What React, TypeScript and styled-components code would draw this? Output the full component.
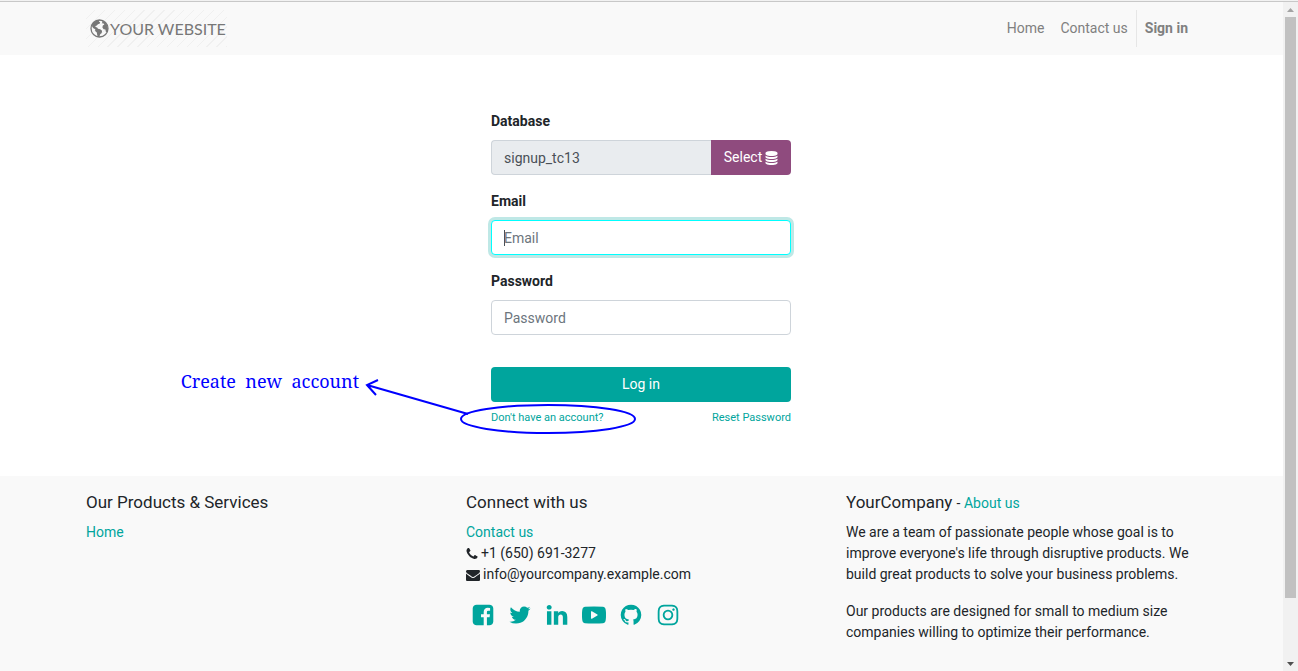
import React from "react";
import styled, { createGlobalStyle } from "styled-components";

const GlobalStyle = createGlobalStyle`
  *, *::before, *::after { box-sizing: border-box; }
  body {
    margin: 0;
    background: #fff;
    color: #212529;
    font: 14px/21px Roboto, "Liberation Sans", sans-serif;
  }
  a { color: #00a59d; text-decoration: none; }
`;

const Window = styled.div`
  display: grid;
  grid-template-columns: minmax(0, 1fr) 15px;
  grid-template-rows: 2px minmax(0, 1fr);
  height: 100vh;
  overflow: hidden;
`;

const WindowEdge = styled.div`
  grid-column: 1 / -1;
  background: #f2f2f2;
  border-bottom: 1px solid #c8c8c8;
`;

const Page = styled.div`
  display: flex;
  flex-direction: column;
`;

const Container = styled.div`
  width: 100%;
  max-width: 1141px;
  margin: 0 auto;
  padding: 0 16px 0 15px;
`;

const Header = styled.header`
  background: #f9f9f9;
  padding: 8px 0;
`;

const Bar = styled(Container)`
  display: flex;
  align-items: center;
  justify-content: space-between;
`;

const Brand = styled.a`
  display: flex;
  align-items: center;
  gap: 1px;
  height: 37px;
  padding: 0 1px 0 4px;
  background: repeating-linear-gradient(135deg, #f9f9f9 0 6px, #f0f0f0 6px 7px);
  color: #777;
  font: 400 16px/37px Lato, sans-serif;
`;

const Nav = styled.nav`
  display: flex;
  align-items: center;
`;

const NavLink = styled.a<{ $strong?: boolean }>`
  padding: 8px;
  color: #808080;
  font-weight: ${(p) => (p.$strong ? 700 : 400)};
  border-left: ${(p) => (p.$strong ? "1px solid #e6e6e6" : "0")};
`;

const Main = styled.main`
  flex: none;
  padding: 56px 1px 48px 0;
`;

const Form = styled.form`
  position: relative;
  max-width: 300px;
  margin: 0 auto;
`;

const Field = styled.div`
  margin-bottom: 16px;
`;

const Label = styled.label`
  display: block;
  margin-bottom: 8px;
  font-weight: 700;
`;

const Input = styled.input`
  display: block;
  width: 100%;
  min-width: 0;
  height: 35px;
  padding: 0 12px;
  border: 1px solid #ced4da;
  border-radius: 4px;
  background: #fff;
  color: #495057;
  font: inherit;
  &::placeholder { color: #6c757d; opacity: 1; }
  &:read-only { background: #e9ecef; border-radius: 4px 0 0 4px; border-right: 0; }
  &:focus {
    outline: 0;
    border-color: #00ffff;
    box-shadow: 0 0 0 3px #bfe8e6;
  }
  &:focus:placeholder-shown {
    caret-color: transparent;
    background: linear-gradient(#495057, #495057) 12px center / 1px 16px no-repeat #fff;
  }
`;

const InputGroup = styled.div`
  display: flex;
`;

const Button = styled.button<{ $tone: "plum" | "teal" }>`
  display: flex;
  flex: none;
  align-items: center;
  justify-content: center;
  gap: 3px;
  width: ${(p) => (p.$tone === "teal" ? "100%" : "80px")};
  height: 35px;
  padding: 0;
  border: 0;
  border-radius: ${(p) => (p.$tone === "teal" ? "4px" : "0 4px 4px 0")};
  background: ${(p) => (p.$tone === "teal" ? "#00a59d" : "#8f4b7e")};
  color: #fff;
  font: inherit;
`;

const Actions = styled.div`
  padding-top: 16px;
`;

const SmallLinks = styled.div`
  display: flex;
  justify-content: space-between;
  padding-top: 5px;
  font-size: 11px;
`;

const Note = styled.div`
  position: absolute;
  right: 432px;
  bottom: 35px;
  color: #0000ff;
  font: 18px/24px "Noto Serif", "Droid Serif", "Liberation Serif", serif;
  white-space: pre;
`;

const NoteMark = styled.svg`
  position: absolute;
  right: 150px;
  bottom: -10px;
  overflow: visible;
  pointer-events: none;
`;

const Footer = styled.footer`
  flex: 1;
  padding-top: 16px;
  background: #f9f9f9;
`;

const Columns = styled(Container)`
  display: grid;
  grid-template-columns: repeat(3, minmax(0, 1fr));
  gap: 30px;
`;

const Title = styled.h2`
  margin: 0 0 9px;
  font-size: 17px;
  line-height: 21px;
  font-weight: 400;
`;

const TitleAside = styled.span`
  font-size: 14px;
  line-height: 14px;
`;

const List = styled.ul`
  margin: 0;
  padding: 0;
  list-style: none;
`;

const ContactRow = styled.li`
  display: flex;
  align-items: center;
  gap: 3px;
`;

const Socials = styled.div`
  display: flex;
  gap: 13px;
  padding: 18px 0 0 5px;
`;

const SocialLink = styled.a`
  display: flex;
`;

const Text = styled.p`
  margin: 0 0 16px;
`;

const Scrollbar = styled.div`
  display: flex;
  flex-direction: column;
  align-items: center;
  background: #f1f1f1;
`;

const Arrow = styled.svg`
  flex: none;
`;

const Track = styled.div`
  flex: 1;
  align-self: stretch;
  padding: 0 2px;
`;

const Thumb = styled.div`
  height: 91%;
  background: #c1c1c1;
`;

const paths = {
  database: "M896 768q237 0 443-43t325-127v170q0 69-103 128t-280 93.5-385 34.5-385-34.5-280-93.5-103-128v-170q119 84 325 127t443 43zm0 768q237 0 443-43t325-127v170q0 69-103 128t-280 93.5-385 34.5-385-34.5-280-93.5-103-128v-170q119 84 325 127t443 43zm0-384q237 0 443-43t325-127v170q0 69-103 128t-280 93.5-385 34.5-385-34.5-280-93.5-103-128v-170q119 84 325 127t443 43zm0-1152q208 0 385 34.5t280 93.5 103 128v128q0 69-103 128t-280 93.5-385 34.5-385-34.5-280-93.5-103-128v-128q0-69 103-128t280-93.5 385-34.5z",
  phone: "M1600 1240q0 27-10 70.5t-21 68.5q-21 50-122 106-94 51-186 51-27 0-53-3.5t-57.5-12.5-47-14.5-55.5-20.5-49-18q-98-35-175-83-127-79-264-216t-216-264q-48-77-83-175-3-9-18-49t-20.5-55.5-14.5-47-12.5-57.5-3.5-53q0-92 51-186 56-101 106-122 25-11 68.5-21t70.5-10q14 0 21 3 18 6 53 76 11 19 30 54t35 63.5 31 53.5q3 4 17.5 25t21.5 35.5 7 28.5q0 20-28.5 50t-62 55-62 53-28.5 46q0 9 5 22.5t8.5 20.5 14 24 11.5 19q76 137 174 235t235 174q2 1 19 11.5t24 14 20.5 8.5 22.5 5q18 0 46-28.5t53-62 55-62 50-28.5q14 0 28.5 7t35.5 21.5 25 17.5q25 15 53.5 31t63.5 35 54 30q70 35 76 53 3 7 3 21z",
  envelope: "M1792 710v794q0 66-47 113t-113 47h-1472q-66 0-113-47t-47-113v-794q44 49 101 87 362 246 497 345 57 42 92.5 65.5t94.5 48 110 24.5h2q51 0 110-24.5t94.5-48 92.5-65.5q170-123 498-345 57-39 100-87zm0-294q0 79-49 151t-122 123q-376 261-468 325-10 7-42.5 31t-54 38.5-52 32.5-57.5 27-50 9h-2q-23 0-50-9t-57.5-27-52-32.5-54-38.5-42.5-31q-91-64-262-182.5t-205-142.5q-62-42-117-115.5t-55-136.5q0-78 41.5-130t118.5-52h1472q65 0 112.5 47t47.5 113z",
  facebook: "M1376 128q119 0 203.5 84.5t84.5 203.5v960q0 119-84.5 203.5t-203.5 84.5h-188v-595h199l30-232h-229v-148q0-56 23.5-84t91.5-28l122-1v-207q-63-9-178-9-136 0-217.5 80t-81.5 226v171h-200v232h200v595h-532q-119 0-203.5-84.5t-84.5-203.5v-960q0-119 84.5-203.5t203.5-84.5h960z",
  twitter: "M1684 408q-67 98-162 167 1 14 1 42 0 130-38 259.5t-115.5 248.5-184.5 210.5-258 146-323 54.5q-271 0-496-145 35 4 78 4 225 0 401-138-105-2-188-64.5t-114-159.5q33 5 61 5 43 0 85-11-112-23-185.5-111.5t-73.5-205.5v-4q68 38 146 41-66-44-105-115t-39-154q0-88 44-163 121 149 294.5 238.5t371.5 99.5q-8-38-8-74 0-134 94.5-228.5t228.5-94.5q140 0 236 102 109-21 205-78-37 115-142 178 93-10 186-50z",
  linkedin: "M477 625v991h-330v-991h330zm21-306q1 73-50.5 122t-135.5 49h-2q-82 0-132-49t-50-122q0-74 51.5-122.5t134.5-48.5 133 48.5 51 122.5zm1166 729v568h-329v-530q0-105-40.5-164.5t-126.5-59.5q-63 0-105.5 34.5t-63.5 85.5q-11 30-11 81v553h-329q2-399 2-647t-1-296l-1-48h329v144h-2q20-32 41-56t56.5-52 87-43.5 114.5-15.5q171 0 275 113.5t104 332.5z",
  youtube: "M1170 896q0-24-20-36l-408-236q-20-12-45-4-25 14-25 42v468q0 28 25 42 25 8 45-4l408-236q20-12 20-36zM1792 896q0 96-1 150t-8.5 136.5-22.5 147.5q-16 73-69 123t-124 58q-222 25-671 25t-671-25q-71-8-124.5-58t-69.5-123q-14-65-21.5-147.5t-8.5-136.5-1-150 1-150 8.5-136.5 22.5-147.5q16-73 69-123t124-58q222-25 671-25t671 25q71 8 124.500 58t69.500 123q14 65 21.500 147.500t8.500 136.500 1 150z",
  github: "M896 128q209 0 385.5 103t279.5 279.5 103 385.5q0 251-146.5 451.5t-378.5 277.5q-27 5-40-7t-13-30q0-3 .5-76.5t.5-134.5q0-97-52-142 57-6 102.5-18t94-39 81-66.5 53-105 20.5-150.5q0-119-79-206 37-91-8-204-28-9-81 11t-92 44l-38 24q-93-26-192-26t-192 26q-16-11-42.5-27t-83.5-38.5-85-13.5q-45 113-8 204-79 87-79 206 0 85 20.5 150t52.5 105 80.5 67 94 39 102.5 18q-39 36-49 103-21 10-45 15t-57 5-65.5-21.5-55.5-62.5q-19-32-48.5-52t-49.5-24l-20-3q-21 0-29 4.5t-5 11.5 9 14 13 12l7 5q22 10 43.5 38t31.5 51l10 23q13 38 44 61.5t67 30 69.5 7 55.5-3.5l23-4q0 38 .5 88.5t.5 54.5q0 18-13 30t-40 7q-232-77-378.5-277.5t-146.5-451.5q0-209 103-385.5t279.5-279.5 385.5-103z",
  instagram: "M1152 896q0-106-75-181t-181-75-181 75-75 181 75 181 181 75 181-75 75-181zm138 0q0 164-115 279t-279 115-279-115-115-279 115-279 279-115 279 115 115 279zm108-410q0 38-27 65t-65 27-65-27-27-65 27-65 65-27 65 27 27 65zm-502-220q-7 0-76.5-.5t-105.5 0-96.5 3-103 10-71.5 18.5q-50 20-88 58t-58 88q-11 29-18.5 71.5t-10 103-3 96.5 0 105.5.5 76.5-.5 76.5 0 105.5 3 96.5 10 103 18.5 71.5q20 50 58 88t88 58q29 11 71.5 18.5t103 10 96.5 3 105.5 0 76.5-.5 76.5.5 105.5 0 96.5-3 103-10 71.5-18.5q50-20 88-58t58-88q11-29 18.5-71.5t10-103 3-96.5 0-105.5-.5-76.5.5-76.5 0-105.5-3-96.5-10-103-18.5-71.5q-20-50-58-88t-88-58q-29-11-71.5-18.5t-103-10-96.5-3-105.5 0-76.5.5zm768 630q0 229-5 317-10 208-124 322t-322 124q-88 5-317 5t-317-5q-208-10-322-124t-124-322q-5-88-5-317t5-317q10-208 124-322t322-124q88-5 317-5t317 5q208 10 322 124t124 322q5 88 5 317z",
};

type IconName = keyof typeof paths;

const Icon = ({ name, size, trim = 0 }: { name: IconName; size: number; trim?: number }) => (
  <svg
    aria-hidden="true"
    width={size - trim}
    height={size}
    viewBox={`${(trim / size) * 896} 0 ${1792 - (trim / size) * 1792} 1792`}
    fill="currentColor"
    fillRule="evenodd"
  >
    <path d={paths[name]} />
  </svg>
);

const Globe = () => (
  <svg aria-hidden="true" width="19" height="19" viewBox="0 0 19 19" fill="currentColor">
    <circle cx="9.5" cy="9.5" r="8.500" fill="none" stroke="currentColor" strokeWidth="1.3" />
    <path d="M2 5.2 4.600 2.400 8.200 1l1.600.6-1 1.200 1.400.5-.6 1.500-1.700.5-1 1.300-1.500.4.2 1.100 1.500.5.9 1.200 2.200.4 1.900 1.500-.4 2.200-1.600 1.400-.7 2.500-1.500.4-.8-2.700-.3-2-1.700-1.600.2-1.600-1.900-1.100L2.200 7.700z" />
    <path d="m11.600 1.400 3.600 1.800 2 3.200.8 3.600-1.200 3.200-1-.4-.4-2.200-1.800-.4-1.200-1.600.4-2 1.600-1-.8-1-1.600-.4.4-1.400z" />
  </svg>
);

const socials: { name: IconName; label: string }[] = [
  { name: "facebook", label: "Facebook" },
  { name: "twitter", label: "Twitter" },
  { name: "linkedin", label: "LinkedIn" },
  { name: "youtube", label: "YouTube" },
  { name: "github", label: "GitHub" },
  { name: "instagram", label: "Instagram" },
];

export default function App() {
  return (
    <Window>
      <GlobalStyle />
      <WindowEdge />
      <Page>
        <Header>
          <Bar>
            <Brand href="#">
              <Globe />
              YOUR WEBSITE
            </Brand>
            <Nav>
              <NavLink href="#">Home</NavLink>
              <NavLink href="#">Contact us</NavLink>
              <NavLink href="#" $strong>Sign in</NavLink>
            </Nav>
          </Bar>
        </Header>
        <Main>
          <Form onSubmit={(e) => e.preventDefault()}>
            <Field>
              <Label htmlFor="db">Database</Label>
              <InputGroup>
                <Input id="db" defaultValue="signup_tc13" readOnly />
                <Button type="button" $tone="plum">
                  Select
                  <Icon name="database" size={14} trim={1} />
                </Button>
              </InputGroup>
            </Field>
            <Field>
              <Label htmlFor="email">Email</Label>
              <Input id="email" placeholder="Email" autoFocus />
            </Field>
            <Field>
              <Label htmlFor="password">Password</Label>
              <Input id="password" type="password" placeholder="Password" />
            </Field>
            <Actions>
              <Button type="submit" $tone="teal">Log in</Button>
              <SmallLinks>
                <a href="#">Don't have an account?</a>
                <a href="#">Reset Password</a>
              </SmallLinks>
            </Actions>
            <Note>{"Create  new  account"}</Note>
            <NoteMark width="276" height="60" fill="none" stroke="#0000ff" strokeWidth="2">
              <ellipse cx="183" cy="41" rx="87" ry="14" />
              <path d="M103 36 2 7M13 2 2 7l9 10" />
            </NoteMark>
          </Form>
        </Main>
        <Footer>
          <Columns>
            <section>
              <Title>Our Products &amp; Services</Title>
              <a href="#">Home</a>
            </section>
            <section>
              <Title>Connect with us</Title>
              <List>
                <ContactRow><a href="#">Contact us</a></ContactRow>
                <ContactRow><Icon name="phone" size={14} trim={2} />+1 (650) 691-3277</ContactRow>
                <ContactRow><Icon name="envelope" size={14} />info@yourcompany.example.com</ContactRow>
              </List>
              <Socials>
                {socials.map((s) => (
                  <SocialLink key={s.name} href="#" aria-label={s.label}>
                    <Icon name={s.name} size={24} />
                  </SocialLink>
                ))}
              </Socials>
            </section>
            <section>
              <Title>
                YourCompany <TitleAside>- <a href="#">About us</a></TitleAside>
              </Title>
              <Text>
                We are a team of passionate people whose goal is to improve everyone's life
                through disruptive products. We build great products to solve your business
                problems.
              </Text>
              <Text>
                Our products are designed for small to medium size companies willing to
                optimize their performance.
              </Text>
            </section>
          </Columns>
        </Footer>
      </Page>
      <Scrollbar aria-hidden="true">
        <Arrow width="15" height="15" viewBox="0 0 15 15" fill="#a3a3a3"><path d="M4 10h7L7.500 6z" /></Arrow>
        <Track><Thumb /></Track>
        <Arrow width="15" height="15" viewBox="0 0 15 15" fill="#505050"><path d="M4 6h7l-3.500 4z" /></Arrow>
      </Scrollbar>
    </Window>
  );
}
